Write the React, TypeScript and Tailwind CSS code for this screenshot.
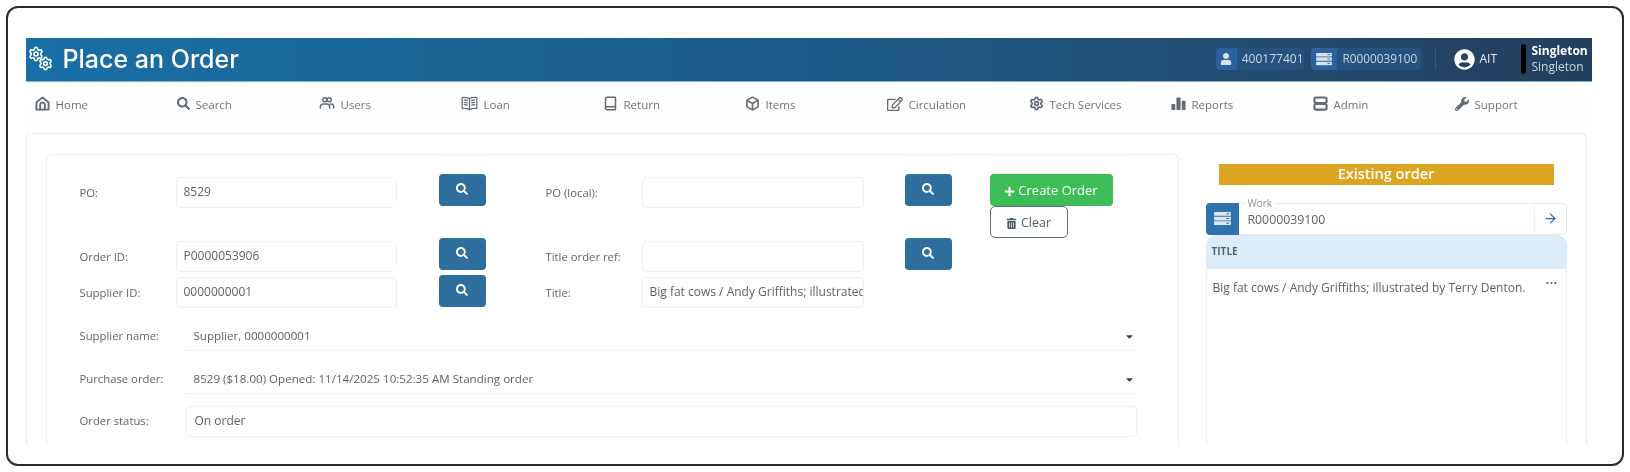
import React from "react";
import { FaSearch, FaRegEdit, FaWrench, FaUser, FaUserCircle, FaTrashAlt, FaPlus, FaCaretDown } from "react-icons/fa";
import { Settings, ArrowRight, Box, Book } from "lucide-react";

const HomeIcon = () => (
  <svg viewBox="0 0 16 16" className="w-[15px] h-[15px]" fill="none" stroke="currentColor" strokeWidth="2">
    <path d="M1.5 7 8 1.5 14.5 7v7.5h-13z" strokeLinejoin="round" />
    <path d="M5.5 14.5V9.5a2.5 2.5 0 0 1 5 0v5" />
  </svg>
);
const UsersIcon = () => (
  <svg viewBox="0 0 18 16" className="w-[16px] h-[15px]" fill="none" stroke="currentColor" strokeWidth="1.6">
    <circle cx="6.5" cy="3.8" r="2.3" />
    <circle cx="11.5" cy="3.8" r="2.3" />
    <path d="M1.5 14v-2.2c0-2 1.8-3.3 4-3.3h3c2.2 0 3.5 1.3 3.5 3.3V14" />
    <path d="M12 8.5h1.5c2 0 3 1.3 3 3V14" />
  </svg>
);
const LoanIcon = () => (
  <svg viewBox="0 0 18 16" className="w-[17px] h-[15px]" fill="none" stroke="currentColor" strokeWidth="1.3">
    <path d="M9 3C7 1.6 4 1.4 1.2 1.6v11.6C4 13 7 13.2 9 14.6c2-1.4 5-1.6 7.8-1.4V1.6C14 1.4 11 1.6 9 3z" strokeLinejoin="round" />
    <path d="M9 3v11.6M3 4.2c1.5 0 3 .2 4.2.7M3 6.7c1.5 0 3 .2 4.2.7M3 9.2c1.5 0 3 .2 4.2.7M15 4.2c-1.5 0-3 .2-4.2.7M15 6.7c-1.5 0-3 .2-4.2.7M15 9.2c-1.5 0-3 .2-4.2.7" />
  </svg>
);
const BarsIcon = () => (
  <svg viewBox="0 0 16 16" className="w-[15px] h-[15px]" fill="currentColor">
    <rect x="0.5" y="8.5" width="4" height="6.5" rx="0.8" />
    <rect x="5.8" y="1.5" width="4.4" height="13.5" rx="0.8" />
    <rect x="11.5" y="5" width="4" height="10" rx="0.8" />
  </svg>
);
const AdminIcon = () => (
  <svg viewBox="0 0 16 16" className="w-[15px] h-[15px]" fill="none" stroke="currentColor" strokeWidth="2.2">
    <rect x="1.5" y="1.5" width="13" height="6" rx="1.8" />
    <rect x="1.5" y="8.5" width="13" height="6" rx="1.8" />
  </svg>
);
const ServerIcon = ({ cls }: { cls: string }) => (
  <svg viewBox="0 0 18 16" className={cls}>
    <rect x="0" y="1" width="18" height="4" rx="0.5" fill="currentColor" />
    <rect x="0" y="6" width="18" height="4" rx="0.5" fill="currentColor" />
    <rect x="0" y="11" width="18" height="4" rx="0.5" fill="currentColor" />
    <path d="M13 3h3M13 8h3M13 13h3" stroke="#2a62a0" strokeWidth="1" />
  </svg>
);
const GearsIcon = () => (
  <span className="flex w-[25px] h-[26px] flex-col text-white shrink-0">
    <Settings size={16} strokeWidth={2.4} />
    <span className="flex justify-end -mt-[6px]">
      <Settings size={15} strokeWidth={2.4} />
    </span>
  </span>
);

const nav: [string, React.ReactNode][] = [
  ["Home", <HomeIcon />],
  ["Search", <FaSearch size={13} />],
  ["Users", <UsersIcon />],
  ["Loan", <LoanIcon />],
  ["Return", <Book size={15} strokeWidth={2.4} />],
  ["Items", <Box size={15} strokeWidth={2.6} />],
  ["Circulation", <FaRegEdit size={16} />],
  ["Tech Services", <Settings size={15} strokeWidth={2.8} />],
  ["Reports", <BarsIcon />],
  ["Admin", <AdminIcon />],
  ["Support", <FaWrench size={14} />],
];

const Input = ({ value, cls }: { value?: string; cls: string }) => (
  <div className={`h-[31px] rounded border border-[#eeeff1] bg-white px-[7px] flex items-center overflow-hidden whitespace-nowrap text-[12px] text-[#5c6269] ${cls}`}>
    {value}
  </div>
);
const SearchBtn = () => (
  <button className="w-[47px] h-[32px] rounded bg-[#2f6f9e] text-white flex items-center justify-center shrink-0">
    <FaSearch size={12} className="-mt-[2px]" />
  </button>
);
const Label = ({ children, cls }: { children: React.ReactNode; cls: string }) => (
  <div className={`text-[11.3px] text-[#5f656b] shrink-0 ${cls}`}>{children}</div>
);

const FormRow = ({ h, l1, v1, l2, v2, btn2, inputTop, children }: { h: string; l1: string; v1: string; l2: string; v2?: string; btn2: boolean; inputTop: string; children?: React.ReactNode }) => (
  <div className={`flex items-start pl-[33px] ${h}`}>
    <Label cls={`w-[96px] leading-[31px] ${inputTop}`}>{l1}</Label>
    <Input value={v1} cls={`w-[221px] ${inputTop}`} />
    <div className="ml-[42px]"><SearchBtn /></div>
    <Label cls={`ml-[60px] w-[96px] leading-[31px] ${inputTop}`}>{l2}</Label>
    <Input value={v2} cls={`w-[222px] ${inputTop}`} />
    <div className="ml-[41px] w-[47px]">{btn2 && <SearchBtn />}</div>
    {children}
  </div>
);

const SelectRow = ({ label, value, cls }: { label: string; value: string; cls: string }) => (
  <div className={`flex items-center pl-[33px] h-[29px] ${cls}`}>
    <Label cls="w-[106px] pt-[1px]">{label}</Label>
    <div className="w-[951px] h-[29px] border-b border-[#eeeff1] flex items-center justify-between pl-[8px] pr-[2px] pt-[1px] text-[11.6px] text-[#5c6269]">
      <span>{value}</span>
      <FaCaretDown size={11} className="text-[#3a3f44]" />
    </div>
  </div>
);

export default function App() {
  return (
    <div className="w-[1630px] h-[472px] bg-white p-[6px] overflow-hidden blur-[0.5px]" style={{ fontFamily: '"Open Sans", sans-serif' }}>
      <div className="w-[1618px] h-[460px] rounded-[12px] border-[2.5px] border-[#2a2a2a] pt-[29.5px] pl-[17.5px]">
        <div className="w-[1566px] h-[407px] overflow-hidden bg-white">
          {/* Header */}
          <header className="h-[44px] flex items-center border-b border-[#7fb0d0] bg-gradient-to-r from-[#186fa6] via-[#1c5c88] to-[#243f5e] text-white">
            <div className="flex items-center pl-[2px]">
              <GearsIcon />
              <span className="ml-[10px] text-[25px] font-medium leading-none" style={{ fontFamily: 'Inter, sans-serif' }}>Place an Order</span>
            </div>
            <div className="ml-auto flex items-center">
              <div className="flex h-[22px] w-[88px] rounded bg-[#27527e] text-[12px] text-[#c9d6e2] items-center">
                <span className="w-[22px] h-full rounded-l bg-[#2a62a0] flex items-center justify-center text-[#d9e2ea]"><FaUser size={12} /></span>
                <span className="ml-[5px]">400177401</span>
              </div>
              <div className="ml-[7px] flex h-[22px] w-[110px] rounded bg-[#27527e] text-[12px] text-[#c9d6e2] items-center">
                <span className="w-[26px] h-full rounded-l bg-[#2a62a0] flex items-center justify-center text-[#d9e2ea]"><ServerIcon cls="w-[16px] h-[14px]" /></span>
                <span className="ml-[6px] text-[11.8px]">R0000039100</span>
              </div>
              <div className="ml-[14px] w-px h-[22px] bg-[#35587c]" />
              <FaUserCircle size={21} className="ml-[18px] text-white" />
              <span className="ml-[5px] text-[12px] text-[#e5ebf0] w-[24px]">AIT</span>
              <div className="ml-[17px] w-[5px] h-[30px] rounded bg-black" />
              <div className="ml-[6px] w-[60px] text-[12px] leading-[16px] whitespace-nowrap">
                <div className="font-bold">Singleton</div>
                <div className="text-[#c9d6e2]">Singleton</div>
              </div>
            </div>
          </header>
          {/* Nav */}
          <nav className="h-[51px] grid grid-cols-[repeat(11,142px)] pl-[9px] pb-[5px] items-center bg-gradient-to-b from-white to-[#fdfdfd] text-[#6c757d] text-[11.5px]">
            {nav.map(([t, ic]) => (
              <div key={t} className="flex items-center gap-[6px]">
                <span className="text-[#626b75] flex items-center -mt-[2px]">{ic}</span>
                <span>{t}</span>
              </div>
            ))}
          </nav>
          {/* Main card */}
          <main className="w-[1561px] h-[312px] rounded-t-[6px] border border-b-0 border-[#e9ebee] pl-[19px] pt-[20px] flex">
            <section className="w-[1133px] h-[300px] rounded-t-[6px] border border-b-0 border-[#eceef0] pt-[19px]">
              <FormRow h="h-[64px]" l1="PO:" v1="8529" l2="PO (local):" btn2 inputTop="mt-[3px]">
                <div className="ml-[38px] flex flex-col items-start">
                  <button className="w-[123px] h-[32px] rounded bg-[#3dbd58] text-white text-[13px] flex items-center justify-center gap-[3px] pt-[3px]">
                    <FaPlus size={11} />Create Order
                  </button>
                  <button className="w-[78px] h-[32px] rounded-[5px] border border-[#5c7080] bg-white text-[#4d5b66] text-[12.5px] flex items-center justify-center gap-[4px] pt-[3px]">
                    <FaTrashAlt size={11} />Clear
                  </button>
                </div>
              </FormRow>
              <FormRow h="h-[37px]" l1="Order ID:" v1="P0000053906" l2="Title order ref:" btn2 inputTop="mt-[3px]" />
              <FormRow h="h-[47px]" l1="Supplier ID:" v1="0000000001" l2="Title:" v2="Big fat cows / Andy Griffiths; illustrated by Terry Denton." btn2={false} inputTop="mt-[2px]" />
              <SelectRow label="Supplier name:" value="Supplier, 0000000001" cls="" />
              <SelectRow label="Purchase order:" value="8529 ($18.00) Opened: 11/14/2025 10:52:35 AM Standing order" cls="mt-[14px]" />
              <div className="flex items-center pl-[33px] mt-[12px]">
                <Label cls="w-[106px]">Order status:</Label>
                <Input value="On order" cls="w-[951px] pl-[8px]" />
              </div>
            </section>
            <aside className="ml-[27px] w-[361px]">
              <div className="ml-[13px] w-[335px] h-[21px] mt-[10px] bg-[#dba421] text-white font-semibold text-[14.5px] flex items-center justify-center">Existing order</div>
              <div className="relative mt-[18px] flex h-[32px] rounded border border-[#e3e5e8]">
                <span className="w-[33px] -ml-px -my-px rounded-l bg-[#2f73ae] flex items-center justify-center text-[#dfe7ee] shrink-0"><ServerIcon cls="w-[17px] h-[15px]" /></span>
                <div className="flex-1 flex items-center pl-[9px] pt-[3px] text-[12.3px] text-[#5c6269]">R0000039100</div>
                <span className="absolute left-[39px] -top-[6px] bg-white px-[2px] text-[10px] leading-[11px] text-[#8b9096]">Work</span>
                <span className="w-[32px] border-l border-[#eceef0] flex items-center justify-center text-[#2f6f9e]"><ArrowRight size={15} strokeWidth={2} /></span>
              </div>
              <div className="h-[220px] rounded-t-[10px] border-x border-[#e2edf6]">
                <div className="h-[34px] -mx-px rounded-t-[10px] bg-[#dcecf9] flex items-center pl-[6px] text-[10px] font-bold text-[#4f6475]">TITLE</div>
                <div className="flex justify-between pl-[6px] pr-[8px] pt-[10px] text-[12px] text-[#5c6269]">
                  <span>Big fat cows / Andy Griffiths; illustrated by Terry Denton.</span>
                  <span className="leading-[12px] tracking-[0.5px] font-bold -mt-[2px]">···</span>
                </div>
              </div>
            </aside>
          </main>
        </div>
      </div>
    </div>
  );
}
